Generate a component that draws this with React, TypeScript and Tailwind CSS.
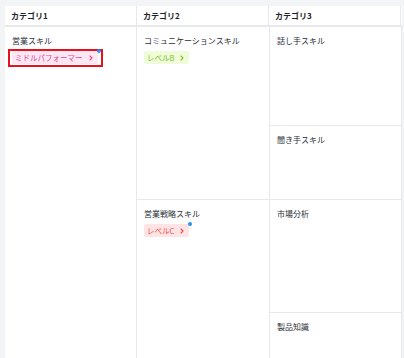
import { ChevronRight } from 'lucide-react';

type Badge = {
  label: string;
  tone: 'pink' | 'green' | 'red';
  dot?: boolean;
  outlined?: boolean;
};

const toneClass: Record<Badge['tone'], string> = {
  pink: 'bg-[#fde7f3] text-[#e0449b]',
  green: 'bg-[#effbd9] text-[#7cc21f]',
  red: 'bg-[#fee4e4] text-[#ef4a4a]',
};

function SkillBadge({ b }: { b: Badge }) {
  const inner = (
    <span
      className={`relative inline-flex h-[13px] items-center gap-[4px] rounded-[2px] px-[3px] text-[7.5px] leading-none ${toneClass[b.tone]}`}
    >
      {b.label}
      <ChevronRight className="h-[8px] w-[8px]" strokeWidth={3.2} />
      {b.dot && (
        <span className="absolute -right-[3px] -top-[2px] h-[4px] w-[4px] rounded-full bg-[#2f8cf5]" />
      )}
    </span>
  );
  if (b.outlined) {
    return (
      <div className="-ml-[4px] -mt-[2px] flex border-2 border-[#e8101a] px-[2px] pb-[1px] pr-[3px]">
        {inner}
      </div>
    );
  }
  return inner;
}

function Cell({
  title,
  badge,
  h,
  last,
}: {
  title: string;
  badge?: Badge;
  h: string;
  last?: boolean;
}) {
  return (
    <div
      className={`${h} px-[7px] pt-[8px] ${last ? 'flex-1' : 'border-b border-[#e6e8ec]'}`}
    >
      <p className="text-[8px] leading-[12px] text-[#2a2f38]">{title}</p>
      {badge && (
        <div className="mt-[4px] flex">
          <SkillBadge b={badge} />
        </div>
      )}
    </div>
  );
}

export default function App() {
  const headers = ['カテゴリ1', 'カテゴリ2', 'カテゴリ3'];

  return (
    <div
      className="h-[358px] overflow-hidden bg-[#f3f4f6] pl-[5px] pt-[6px]"
      style={{ fontFamily: '"Noto Sans CJK JP", "Noto Sans", sans-serif' }}
    >
      <div className="flex h-[360px] w-[397px] flex-col bg-white">
        <div className="flex h-[21px] shrink-0 border-b-2 border-[#e6e8ec]">
          {headers.map((h) => (
            <div
              key={h}
              className="flex w-[132px] items-center border-r border-[#e6e8ec] px-[6px] text-[8px] font-bold text-[#1f2329]"
            >
              {h}
            </div>
          ))}
        </div>

        <div className="flex flex-1">
          <div className="flex w-[132px] flex-col border-r border-[#e6e8ec]">
            <Cell
              title="営業スキル"
              h="flex-1"
              last
              badge={{ label: 'ミドルパフォーマー', tone: 'pink', dot: true, outlined: true }}
            />
          </div>

          <div className="flex w-[133px] flex-col border-r border-[#e6e8ec]">
            <Cell
              title="コミュニケーションスキル"
              h="h-[173px]"
              badge={{ label: 'レベルB', tone: 'green' }}
            />
            <Cell
              title="営業戦略スキル"
              h="flex-1"
              last
              badge={{ label: 'レベルC', tone: 'red', dot: true }}
            />
          </div>

          <div className="flex w-[132px] flex-col border-r border-[#e6e8ec]">
            <Cell title="話し手スキル" h="h-[99px]" />
            <Cell title="聞き手スキル" h="h-[74px]" />
            <Cell title="市場分析" h="h-[113px]" />
            <Cell title="製品知識" h="flex-1" last />
          </div>
        </div>
      </div>
    </div>
  );
}
